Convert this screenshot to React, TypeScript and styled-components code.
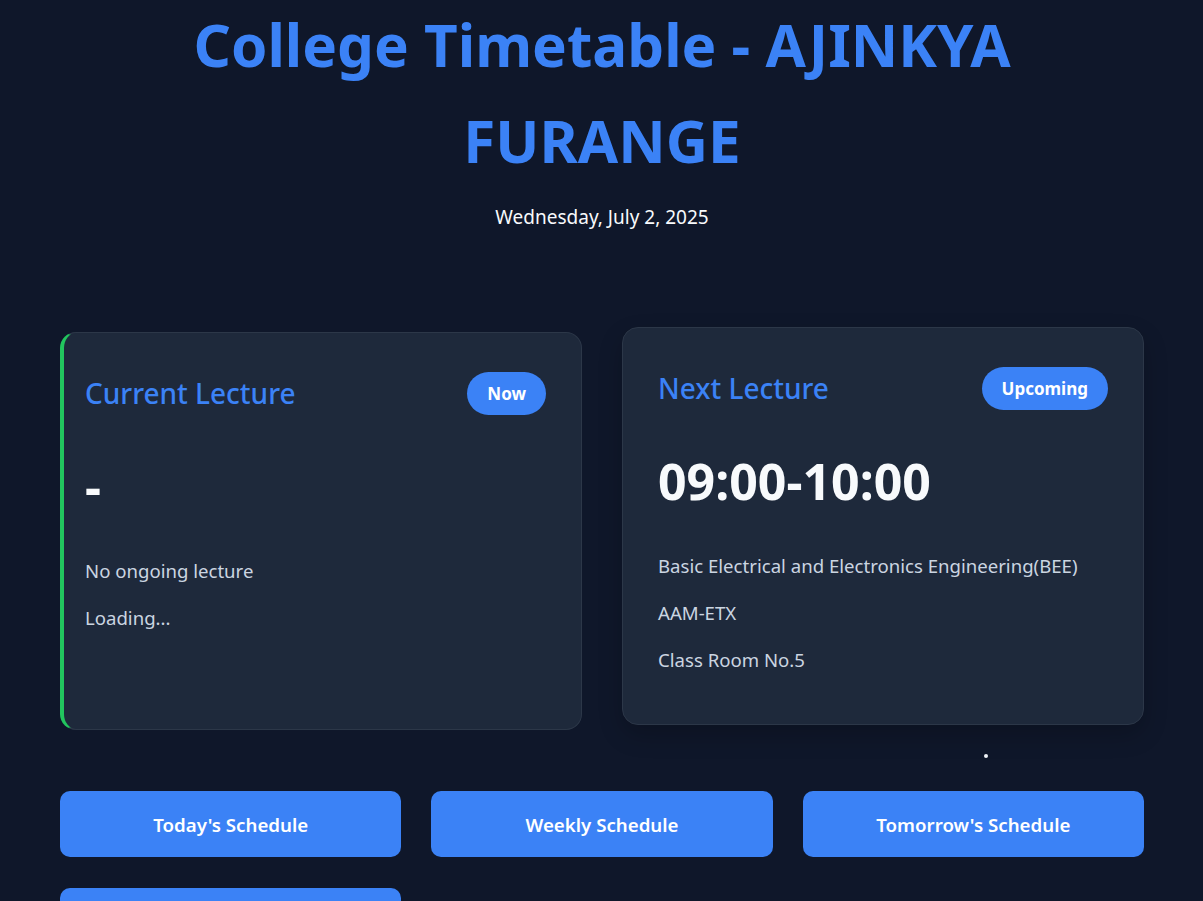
import React from 'react';
import styled, { createGlobalStyle } from 'styled-components';

const GlobalStyle = createGlobalStyle`
  html, body {
    margin: 0;
    padding: 0;
    background: #0f172a;
  }
  body {
    font-family: 'Noto Sans', 'Open Sans', sans-serif;
    color: #e2e8f0;
    overflow: hidden;
  }
  * {
    box-sizing: border-box;
  }
`;

const SPage = styled.div`
  padding: 0 59px 0 60px;
`;

const SHeader = styled.header`
  text-align: center;
`;

const STitle = styled.h1`
  margin: -3px 0 0;
  font-size: 58.4px;
  line-height: 96px;
  font-weight: 700;
  color: #3b82f6;
`;

const SDate = styled.p`
  margin: 14px 0 0;
  font-size: 19px;
  line-height: 28px;
  color: #f8fafc;
`;

const SCards = styled.section`
  margin-top: 101px;
  display: grid;
  grid-template-columns: 1fr 1fr;
  gap: 40px;
`;

interface ICardStyle {
  current?: boolean;
  lifted?: boolean;
}

const SCard = styled.div<ICardStyle>`
  background: #1e293b;
  border: 1px solid #2c3748;
  border-left: ${({ current }) => (current ? '4px solid #22c55e' : '1px solid #2c3748')};
  border-radius: 16px;
  padding: ${({ current }) => (current ? '39px 35px 51px 21px' : '39px 35px 51px 35px')};
  transform: ${({ lifted }) => (lifted ? 'translateY(-5px)' : 'none')};
  box-shadow: ${({ lifted }) => (lifted ? '0 10px 25px rgba(0, 0, 0, 0.2)' : 'none')};
  display: flex;
  flex-direction: column;
`;

const SCardHead = styled.div`
  display: flex;
  align-items: center;
  justify-content: space-between;
  height: 43px;
`;

const SCardTitle = styled.h2`
  margin: 0;
  font-size: 28px;
  line-height: 43px;
  font-weight: 500;
  color: #3b82f6;
`;

const SBadge = styled.span`
  background: #3b82f6;
  color: #ffffff;
  font-size: 17px;
  font-weight: 700;
  line-height: 27px;
  padding: 8px 20px;
  border-radius: 999px;
`;

const STime = styled.div`
  margin-top: 41px;
  font-size: 50px;
  line-height: 60px;
  font-weight: 700;
  color: #f8fafc;
`;

const SInfo = styled.div`
  margin-top: 41px;
  display: flex;
  flex-direction: column;
  gap: 20px;
`;

const SInfoLine = styled.p`
  margin: 0;
  font-size: 18.6px;
  line-height: 27px;
  color: #cbd5e1;
`;

const SDotRow = styled.div`
  height: 61px;
  display: flex;
  align-items: flex-start;
  padding: 24px 0 0 924px;
`;

const SDot = styled.span`
  width: 4px;
  height: 4px;
  border-radius: 50%;
  background: #f1f5f9;
`;

const SActions = styled.nav`
  display: grid;
  grid-template-columns: repeat(3, 1fr);
  column-gap: 30px;
  row-gap: 31px;
`;

const SButton = styled.button`
  background: #3b82f6;
  color: #ffffff;
  border: none;
  border-radius: 10px;
  padding: 19.5px 16px;
  font-family: inherit;
  font-size: 18.7px;
  line-height: 27px;
  font-weight: 600;
  cursor: pointer;
`;

interface ILecture {
  title: string;
  badge: string;
  time: string;
  lines: string[];
  current?: boolean;
}

const lectures: ILecture[] = [
  {
    title: 'Current Lecture',
    badge: 'Now',
    time: '-',
    lines: ['No ongoing lecture', 'Loading...'],
    current: true,
  },
  {
    title: 'Next Lecture',
    badge: 'Upcoming',
    time: '09:00-10:00',
    lines: ['Basic Electrical and Electronics Engineering(BEE)', 'AAM-ETX', 'Class Room No.5'],
  },
];

const actions = ["Today's Schedule", 'Weekly Schedule', "Tomorrow's Schedule", 'Exam Schedule'];

const App = () => (
  <>
    <GlobalStyle />
    <SPage>
      <SHeader>
        <STitle>College Timetable - AJINKYA FURANGE</STitle>
        <SDate>Wednesday, July 2, 2025</SDate>
      </SHeader>

      <SCards>
        {lectures.map(lecture => (
          <SCard key={lecture.title} current={lecture.current} lifted={!lecture.current}>
            <SCardHead>
              <SCardTitle>{lecture.title}</SCardTitle>
              <SBadge>{lecture.badge}</SBadge>
            </SCardHead>
            <STime>{lecture.time}</STime>
            <SInfo>
              {lecture.lines.map(line => (
                <SInfoLine key={line}>{line}</SInfoLine>
              ))}
            </SInfo>
          </SCard>
        ))}
      </SCards>

      <SDotRow>
        <SDot />
      </SDotRow>

      <SActions>
        {actions.map(label => (
          <SButton key={label}>{label}</SButton>
        ))}
      </SActions>
    </SPage>
  </>
);

export default App;
